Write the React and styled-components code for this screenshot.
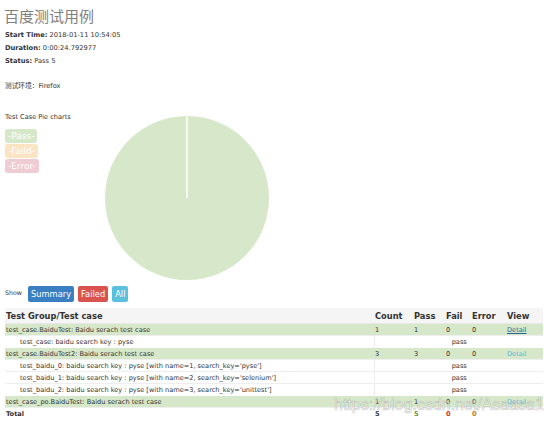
import styled, { createGlobalStyle } from 'styled-components';

const GlobalStyle = createGlobalStyle`
    html, body {
        margin: 0;
        padding: 0;
        background: #fff;
    }
    body {
        font-family: "DejaVu Sans", Verdana, sans-serif;
        color: #333;
    }
`;

const Page = styled.div`
    position: relative;
    width: 550px;
    height: 425px;
    padding: 0 5px;
    box-sizing: border-box;
    overflow: hidden;
`;

const Title = styled.h1`
    margin: 6px 0 0 -1px;
    font-family: "Noto Sans CJK SC", sans-serif;
    font-weight: 400;
    font-size: 15px;
    line-height: 20px;
    color: #808080;
`;

const Info = styled.p`
    margin: ${(p) => p.gap || 0}px 0 0;
    font-size: 6.7px;
    line-height: 13px;
    color: #333;

    b {
        font-weight: bold;
    }
`;

const Env = styled.span`
    font-family: "Noto Sans CJK SC", sans-serif;
`;

const ChartArea = styled.div`
    display: flex;
    align-items: flex-start;
    margin-top: 19px;
`;

const LegendColumn = styled.div`
    width: 100px;
    display: flex;
    flex-direction: column;
    align-items: flex-start;
`;

const ChartHeading = styled.div`
    font-size: 6.6px;
    line-height: 10px;
    color: #333;
    margin-bottom: 7px;
`;

const LegendTag = styled.div`
    height: 14px;
    line-height: 14px;
    padding: 0 3px;
    margin-bottom: 1px;
    border-radius: 3px;
    font-size: 9px;
    color: #fff;
    background: ${(p) => p.color};
`;

const PieBox = styled.div`
    margin-top: 4px;
    width: 164px;
    height: 164px;
`;

const ShowRow = styled.div`
    display: flex;
    align-items: center;
    gap: 4px;
    margin-top: 6px;
    height: 16px;
`;

const ShowLabel = styled.span`
    font-size: 6.3px;
    color: #333;
    margin-right: 2px;
    align-self: flex-start;
    margin-top: 3px;
`;

const Button = styled.span`
    display: inline-block;
    height: 16px;
    line-height: 16px;
    padding: 0 3px;
    border-radius: 2px;
    font-size: 8.3px;
    color: #fff;
    background: ${(p) => p.bg};
`;

const Table = styled.table`
    margin-top: 6px;
    width: 538px;
    border-collapse: collapse;
    table-layout: fixed;
    font-size: 6.6px;
    color: #333;
`;

const HeadCell = styled.th`
    height: 15px;
    padding: 0 0 0 1px;
    text-align: left;
    font-size: 8.3px;
    font-weight: bold;
    color: #333;
    background: #f5f5f5;
    border-bottom: 1px solid #e8e8e8;
`;

const Row = styled.tr`
    height: 12px;
    background: ${(p) => (p.$group ? '#d6e8c9' : '#fff')};
    font-weight: ${(p) => (p.$total ? 'bold' : 'normal')};
`;

const Cell = styled.td`
    padding: 0 0 0 ${(p) => (p.$indent ? 15 : 1)}px;
    border-top: 1px solid ${(p) => (p.$lined ? '#eee' : 'transparent')};
    border-left: ${(p) => (p.$divider ? '1px solid #eee' : 'none')};
    white-space: nowrap;
    overflow: hidden;
    text-align: ${(p) => (p.$center ? 'center' : 'left')};
    color: ${(p) => p.$color || '#333'};
`;

const DetailLink = styled.a`
    color: ${(p) => (p.$visited ? '#2a6496' : '#5bb5d9')};
    text-decoration: ${(p) => (p.$visited ? 'underline' : 'none')};
`;

const Watermark = styled.div`
    position: absolute;
    left: 334px;
    top: 396px;
    font-family: "Liberation Sans", Arial, sans-serif;
    font-size: 16px;
    color: rgba(255, 255, 255, 0.55);
    -webkit-text-stroke: 0.6px rgba(150, 150, 150, 0.55);
    white-space: nowrap;
    pointer-events: none;
`;

const PieChart = () => (
    <svg width="164" height="164" viewBox="0 0 164 164">
        <circle cx="82" cy="82" r="82" fill="#d6e8c9" />
        <line x1="82" y1="0" x2="82" y2="82" stroke="#fff" strokeWidth="1.5" />
    </svg>
);

const groups = [
    {
        name: 'test_case.BaiduTest: Baidu serach test case',
        count: 1, pass: 1, fail: 0, error: 0, visited: true,
        cases: ['test_case: baidu search key : pyse'],
    },
    {
        name: 'test_case.BaiduTest2: Baidu serach test case',
        count: 3, pass: 3, fail: 0, error: 0,
        cases: [
            "test_baidu_0: baidu search key : pyse [with name=1, search_key='pyse']",
            "test_baidu_1: baidu search key : pyse [with name=2, search_key='selenium']",
            "test_baidu_2: baidu search key : pyse [with name=3, search_key='unittest']",
        ],
    },
    {
        name: 'test_case_po.BaiduTest: Baidu serach test case',
        count: 1, pass: 1, fail: 0, error: 0,
        cases: [],
    },
];

const App = () => (
    <Page>
        <GlobalStyle />
        <Title>百度测试用例</Title>
        <Info gap={3}><b>Start Time:</b> 2018-01-11 10:54:05</Info>
        <Info><b>Duration:</b> 0:00:24.792977</Info>
        <Info><b>Status:</b> Pass 5</Info>
        <Info gap={11}><Env>测试环境：</Env>Firefox</Info>

        <ChartArea>
            <LegendColumn>
                <ChartHeading>Test Case Pie charts</ChartHeading>
                <LegendTag color="#d6e8c9">-Pass-</LegendTag>
                <LegendTag color="#fbe4c4">-Faild-</LegendTag>
                <LegendTag color="#efccd3">-Error-</LegendTag>
            </LegendColumn>
            <PieBox>
                <PieChart />
            </PieBox>
        </ChartArea>

        <ShowRow>
            <ShowLabel>Show</ShowLabel>
            <Button bg="#3a7fc1">Summary</Button>
            <Button bg="#d9534f">Failed</Button>
            <Button bg="#5bc0de">All</Button>
        </ShowRow>

        <Table>
            <colgroup>
                <col style={{ width: 369 }} />
                <col style={{ width: 39 }} />
                <col style={{ width: 32 }} />
                <col style={{ width: 26 }} />
                <col style={{ width: 35 }} />
                <col style={{ width: 37 }} />
            </colgroup>
            <thead>
                <tr>
                    <HeadCell>Test Group/Test case</HeadCell>
                    <HeadCell>Count</HeadCell>
                    <HeadCell>Pass</HeadCell>
                    <HeadCell>Fail</HeadCell>
                    <HeadCell>Error</HeadCell>
                    <HeadCell>View</HeadCell>
                </tr>
            </thead>
            <tbody>
                {groups.map((g) => (
                    <>
                        <Row $group key={g.name}>
                            <Cell>{g.name}</Cell>
                            <Cell>{g.count}</Cell>
                            <Cell>{g.pass}</Cell>
                            <Cell>{g.fail}</Cell>
                            <Cell>{g.error}</Cell>
                            <Cell>
                                <DetailLink href="#" $visited={g.visited}>Detail</DetailLink>
                            </Cell>
                        </Row>
                        {g.cases.map((c) => (
                            <Row key={c}>
                                <Cell $indent $lined>{c}</Cell>
                                <Cell colSpan={5} $center $lined $divider>pass</Cell>
                            </Row>
                        ))}
                    </>
                ))}
                <Row $total>
                    <Cell $lined>Total</Cell>
                    <Cell $lined>5</Cell>
                    <Cell $lined $color="#5b8c4a">5</Cell>
                    <Cell $lined $color="#c9302c">0</Cell>
                    <Cell $lined $color="#b8792a">0</Cell>
                    <Cell $lined>&nbsp;</Cell>
                </Row>
            </tbody>
        </Table>

        <Watermark>https://blog.csdn.net/Asaasa1</Watermark>
    </Page>
);

export default App;
